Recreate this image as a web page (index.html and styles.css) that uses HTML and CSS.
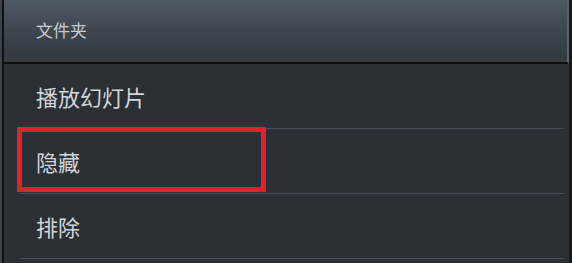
FILE: index.html
```html
<!DOCTYPE html>
<html lang="zh">
<head>
<meta charset="utf-8">
<link rel="stylesheet" href="styles.css">
</head>
<body>
<div class="dialog">
  <div class="header">文件夹</div>
  <ul class="menu">
    <li class="item">播放幻灯片</li>
    <li class="item highlighted">隐藏</li>
    <li class="item">排除</li>
  </ul>
</div>
</body>
</html>
```
FILE: styles.css
```css
html, body {
  margin: 0;
  padding: 0;
  background: #22262c;
  width: 572px;
  height: 263px;
  overflow: hidden;
}
.dialog {
  box-sizing: border-box;
  width: 572px;
  height: 263px;
  border-left: 2px solid #3c4249;
  border-right: 3px solid #15181c;
  background: #2b2f36;
  display: flex;
  flex-direction: column;
  font-family: "Noto Sans CJK SC", "Noto Sans", sans-serif;
}
.header {
  box-sizing: border-box;
  height: 64px;
  padding-left: 32px;
  padding-bottom: 3px;
  display: flex;
  align-items: center;
  font-size: 17px;
  color: #c9cdd1;
  background: linear-gradient(#4f5964, #3a424b 60%, #323941);
  border-left: 2px solid #0e1114;
  border-right: 2px solid #5b636b;
  border-bottom: 2px solid #0c0e10;
}
.menu {
  list-style: none;
  margin: 0;
  padding: 0 5px 0 16px;
  border-left: 2px solid #0e1114;
  flex: 1;
}
.item {
  box-sizing: border-box;
  height: 65px;
  padding-left: 16px;
  display: flex;
  align-items: center;
  font-size: 22px;
  color: #d3d6d9;
  border-bottom: 1px solid #4a4f57;
}
.highlighted {
  position: relative;
}
.highlighted::after {
  content: "";
  position: absolute;
  left: -3px;
  top: -2px;
  width: 249px;
  height: 65px;
  box-sizing: border-box;
  border: 5px solid #e1212b;
}
```
